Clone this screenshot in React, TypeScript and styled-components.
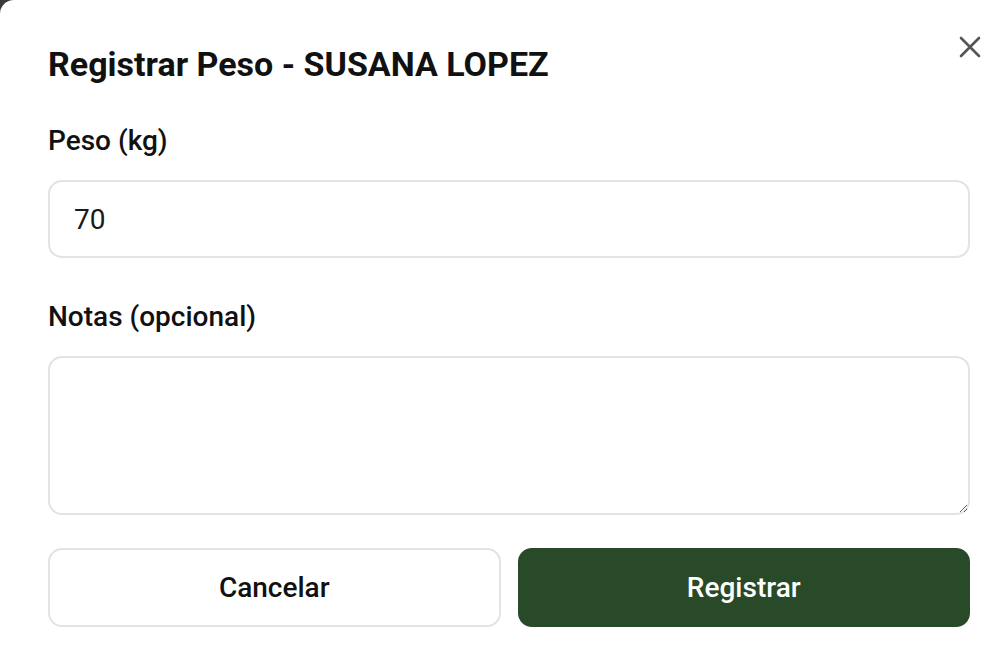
import React from "react";
import styled, { createGlobalStyle } from "styled-components";

const Global = createGlobalStyle`
  html, body {
    margin: 0;
    padding: 0;
    background: #3a3a3a;
  }
  * { box-sizing: border-box; }
`;

const Dialog = styled.div`
  width: 1006px;
  height: 652px;
  background: #ffffff;
  border-top-left-radius: 14px;
  padding: 44px 36px 0 48px;
  font-family: Roboto, "Noto Sans", Arial, sans-serif;
  color: #111;
  position: relative;
  display: flex;
  flex-direction: column;
`;

const Title = styled.h2`
  margin: 0;
  font-size: 34px;
  line-height: 40px;
  font-weight: 700;
  color: #111;
`;

const CloseButton = styled.button`
  position: absolute;
  top: 29px;
  right: 18px;
  width: 36px;
  height: 36px;
  padding: 0;
  border: 0;
  background: transparent;
  display: flex;
  align-items: center;
  justify-content: center;
  cursor: pointer;
`;

const Form = styled.form`
  display: flex;
  flex-direction: column;
  margin-top: 39px;
`;

const Field = styled.div<{ $mt?: number }>`
  display: flex;
  flex-direction: column;
  gap: 21px;
  margin-top: ${(p) => p.$mt ?? 0}px;
`;

const Label = styled.label`
  font-size: 28px;
  line-height: 36px;
  font-weight: 500;
  color: #111;
`;

const Input = styled.input`
  display: block;
  width: 100%;
  height: 78px;
  border: 2px solid #e3e3e3;
  border-radius: 14px;
  padding: 0 24px;
  font-family: inherit;
  font-size: 28px;
  color: #1a1a1a;
  background: #fff;
  outline: none;
`;

const TextArea = styled.textarea`
  display: block;
  width: 100%;
  height: 159px;
  border: 2px solid #e3e3e3;
  border-radius: 14px;
  padding: 20px 24px;
  font-family: inherit;
  font-size: 28px;
  color: #1a1a1a;
  background: #fff;
  outline: none;
  resize: vertical;
`;

const Actions = styled.div`
  display: grid;
  grid-template-columns: 1fr 1fr;
  gap: 17px;
  margin-top: 33px;
`;

const Button = styled.button<{ $primary?: boolean }>`
  height: 79px;
  border-radius: 14px;
  font-family: inherit;
  font-size: 28px;
  font-weight: 500;
  cursor: pointer;
  border: 2px solid ${(p) => (p.$primary ? "#284a28" : "#e3e3e3")};
  background: ${(p) => (p.$primary ? "#284a28" : "#ffffff")};
  color: ${(p) => (p.$primary ? "#ffffff" : "#111")};
`;

export default function App() {
  return (
    <>
      <Global />
      <Dialog>
        <Title>Registrar Peso - SUSANA LOPEZ</Title>
        <CloseButton type="button" aria-label="Cerrar">
          <svg width="22" height="22" viewBox="0 0 22 22" fill="none">
            <path d="M2 2 L20 20 M20 2 L2 20" stroke="#555" strokeWidth="2.6" strokeLinecap="round" />
          </svg>
        </CloseButton>
        <Form onSubmit={(e) => e.preventDefault()}>
          <Field>
            <Label>Peso (kg)</Label>
            <Input type="text" defaultValue="70" />
          </Field>
          <Field $mt={41}>
            <Label>Notas (opcional)</Label>
            <TextArea />
          </Field>
          <Actions>
            <Button type="button">Cancelar</Button>
            <Button type="submit" $primary>Registrar</Button>
          </Actions>
        </Form>
      </Dialog>
    </>
  );
}
